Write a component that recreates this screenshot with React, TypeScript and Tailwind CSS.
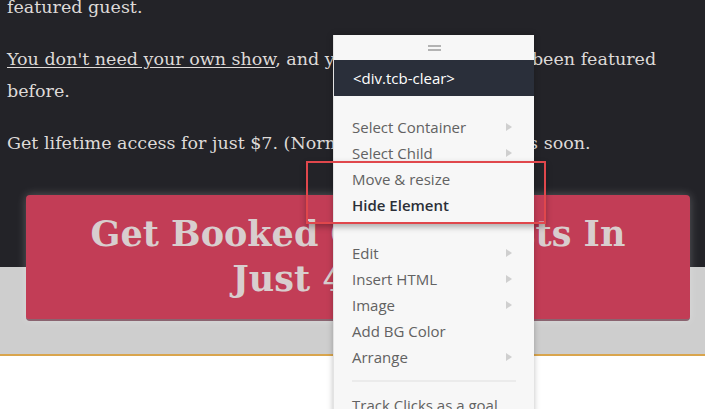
import { ReactNode } from "react";

const serif = { fontFamily: '"DejaVu Serif", "Liberation Serif", serif' };
const sans = { fontFamily: '"Open Sans", "Noto Sans", sans-serif' };

function Arrow() {
  return (
    <svg width="6" height="8" viewBox="0 0 6 8" className="text-[#cfcfcf]">
      <path d="M0 0 L6 4 L0 8 Z" fill="currentColor" />
    </svg>
  );
}

function Item({ label, sub, bold }: { label: string; sub?: boolean; bold?: boolean }) {
  return (
    <div className="flex h-[26px] items-center justify-between pl-[18px] pr-[22px]">
      <span className={bold ? "font-semibold text-[#2b2f38]" : "text-[#626262]"}>{label}</span>
      {sub && <Arrow />}
    </div>
  );
}

function Menu() {
  return (
    <div
      className="absolute left-[333px] top-[35px] w-[201px] h-[400px] bg-[#f7f7f7] border-l border-[#e3e3e3] shadow-[0_0_6px_rgba(0,0,0,0.25)] text-[15px]"
      style={sans}
    >
      <div className="flex h-[25px] flex-col items-center justify-center gap-[2px]">
        <div className="h-[2px] w-[13px] bg-[#b3b3b3]" />
        <div className="h-[2px] w-[13px] bg-[#b3b3b3]" />
      </div>
      <div className="flex h-[36px] items-center bg-[#2a2f3a] pl-[19px] text-white">&lt;div.tcb-clear&gt;</div>
      <div className="pt-[18px]">
        <Item label="Select Container" sub />
        <Item label="Select Child" sub />
        <Item label="Move & resize" />
        <Item label="Hide Element" bold />
      </div>
      <div className="pt-[22px]">
        <Item label="Edit" sub />
        <Item label="Insert HTML" sub />
        <Item label="Image" sub />
        <Item label="Add BG Color" />
        <Item label="Arrange" sub />
      </div>
      <div className="mx-[18px] my-[10px] h-[2px] bg-[#ebebeb]" />
      <Item label="Track Clicks as a goal" />
    </div>
  );
}

function Para({ children }: { children: ReactNode }) {
  return <p className="mb-5 text-[17.5px] leading-[32px] text-[#dedad8]">{children}</p>;
}

export default function App() {
  return (
    <div className="relative h-[409px] w-[705px] overflow-hidden bg-white">
      <div className="flow-root bg-[linear-gradient(to_bottom,#232328_267px,#cecece_267px)] pb-[33px] border-b-2 border-[#d9a54d]">
        <div className="-mt-[9px] pl-[7px]" style={serif}>
          <Para>featured guest.</Para>
          <Para>
            <span className="underline underline-offset-2">You don't need your own show</span>, and you don't need to have been featured
            <br />
            before.
          </Para>
          <Para>Get lifetime access for just $7. (Normally $47, cost changes soon.</Para>
        </div>
        <div
          className="ml-[26px] mt-[36px] w-[664px] h-[126px] rounded-[4px] bg-[#c23d56] pt-[16px] text-center text-[35px] font-bold leading-[45px] text-[#d8cece] shadow-[0_0_10px_rgba(255,255,255,0.25)] border-b-2 border-[#8a6470]"
          style={serif}
        >
          Get Booked On Podcasts In
          <br />
          Just 4 Weeks
        </div>
      </div>
      <Menu />
      <div className="absolute left-[306px] top-[161px] h-[63px] w-[240px] border-2 border-[#e0474c] shadow-[0_3px_6px_rgba(0,0,0,0.3)]" />
    </div>
  );
}
